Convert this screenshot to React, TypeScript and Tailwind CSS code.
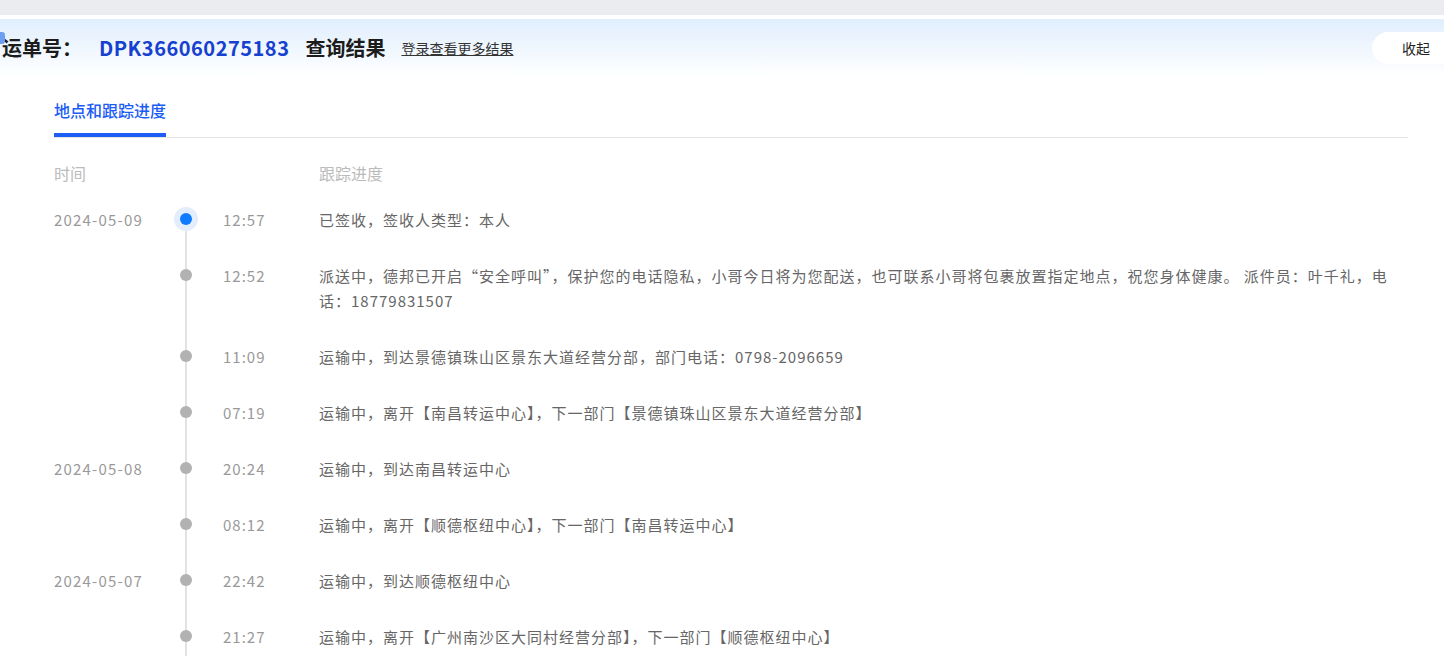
import React from "react";

const rows = [
  { date: "2024-05-09", time: "12:57", text: "已签收，签收人类型：本人", active: true },
  { date: "", time: "12:52", text: "派送中，德邦已开启“安全呼叫”，保护您的电话隐私，小哥今日将为您配送，也可联系小哥将包裹放置指定地点，祝您身体健康。 派件员：叶千礼，电话：18779831507" },
  { date: "", time: "11:09", text: "运输中，到达景德镇珠山区景东大道经营分部，部门电话：0798-2096659" },
  { date: "", time: "07:19", text: "运输中，离开【南昌转运中心】，下一部门【景德镇珠山区景东大道经营分部】" },
  { date: "2024-05-08", time: "20:24", text: "运输中，到达南昌转运中心" },
  { date: "", time: "08:12", text: "运输中，离开【顺德枢纽中心】，下一部门【南昌转运中心】" },
  { date: "2024-05-07", time: "22:42", text: "运输中，到达顺德枢纽中心" },
  { date: "", time: "21:27", text: "运输中，离开【广州南沙区大同村经营分部】，下一部门【顺德枢纽中心】" },
];

export default function App() {
  return (
    <div
      className="w-[1444px] h-[656px] overflow-hidden bg-white"
      style={{ fontFamily: '"Microsoft YaHei", "Noto Sans CJK SC", "Noto Sans", sans-serif' }}
    >
      <div className="h-[15px] bg-[#ebecf0]" />
      <div className="h-[4px] bg-white" />
      <div className="relative h-[58px] flex items-center bg-gradient-to-b from-[#e0eefd] to-white">
        <div className="absolute left-0 top-[13px] w-[5px] h-[12px] rounded-r-[3px] bg-[#6f9df2]" />
        <span className="ml-[2px] text-[20px] font-bold text-[#1c1c1c] leading-none">运单号：</span>
        <span className="ml-[17px] text-[20px] font-bold text-[#1640cf] leading-none tracking-[0.5px]">DPK366060275183</span>
        <span className="ml-[16px] text-[20px] font-bold text-[#1c1c1c] leading-none">查询结果</span>
        <span className="ml-[16px] text-[14px] text-[#333] underline leading-none">登录查看更多结果</span>
        <div className="ml-auto mr-[-24px] h-[32px] w-[96px] rounded-full bg-white flex items-center pl-[30px] text-[14px] text-[#222]">
          收起
        </div>
      </div>

      <div className="pl-[54px] pr-[36px]">
        <div className="pt-[21px] border-b border-[#e4e4e4] flex">
          <div className="flex flex-col">
            <span className="text-[16px] leading-[24px] text-[#1a5cf5] font-medium">地点和跟踪进度</span>
            <div className="mt-[11px] h-[4px] bg-[#1f5ef6]" />
          </div>
        </div>

        <div className="mt-[23px] flex text-[16px] leading-[24px] text-[#bbbbbb]">
          <div className="w-[265px]">时间</div>
          <div>跟踪进度</div>
        </div>

        <div className="mt-[22px]">
          {rows.map((r, i) => (
            <div key={i} className="flex">
              <div className="w-[120px] text-[15px] leading-[25px] text-[#999] tracking-[1.2px]">{r.date}</div>
              <div className="relative w-[24px] shrink-0">
                <div
                  className={
                    i === 0
                      ? "absolute left-[11px] top-[12px] bottom-0 w-[2px] bg-[#e2e2e2]"
                      : "absolute left-[11px] top-0 bottom-0 w-[2px] bg-[#e2e2e2]"
                  }
                />
                {r.active ? (
                  <div className="absolute left-0 top-0 w-[24px] h-[24px] rounded-full bg-[#e3edfc] flex items-center justify-center">
                    <div className="w-[12px] h-[12px] rounded-full bg-[#0f7cff]" />
                  </div>
                ) : (
                  <div className="absolute left-[6px] top-[6px] w-[12px] h-[12px] rounded-full bg-[#b2b2b2]" />
                )}
              </div>
              <div className="ml-[25px] w-[96px] shrink-0 text-[15px] leading-[25px] text-[#999] tracking-[1px]">{r.time}</div>
              <div className="flex-1 pb-[31px] text-[15px] leading-[25px] text-[#666] tracking-[1px]">{r.text}</div>
            </div>
          ))}
        </div>
      </div>
    </div>
  );
}
